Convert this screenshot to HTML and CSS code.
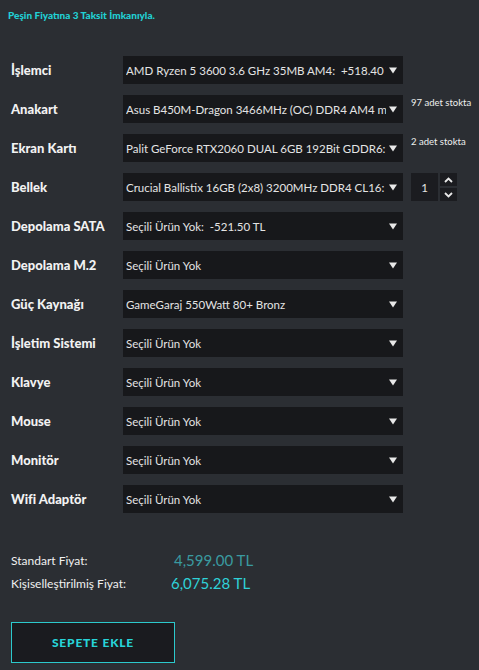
FILE: index.html
```html
<!DOCTYPE html>
<html lang="tr">
<head>
<meta charset="utf-8">
<link rel="stylesheet" href="styles.css">
</head>
<body>
<div class="page">
  <p class="promo">Peşin Fiyatına 3 Taksit İmkanıyla.</p>
  <div class="rows">
    <div class="row">
      <div class="label">İşlemci</div>
      <div class="select"><span class="val">AMD Ryzen 5 3600 3.6 GHz 35MB AM4:&nbsp; +518.40 TL</span><svg class="arrow" width="8" height="7" viewBox="0 0 8 7"><path d="M0 0.5 H8 L4 6.5 Z" fill="#e8e8e8"/></svg></div>
    </div>
    <div class="row">
      <div class="label">Anakart</div>
      <div class="select"><span class="val">Asus B450M-Dragon 3466MHz (OC) DDR4 AM4 mATX</span><svg class="arrow" width="8" height="7" viewBox="0 0 8 7"><path d="M0 0.5 H8 L4 6.5 Z" fill="#e8e8e8"/></svg></div>
      <div class="stock">97 adet stokta</div>
    </div>
    <div class="row">
      <div class="label">Ekran Kartı</div>
      <div class="select"><span class="val">Palit GeForce RTX2060 DUAL 6GB 192Bit GDDR6:&nbsp;</span><svg class="arrow" width="8" height="7" viewBox="0 0 8 7"><path d="M0 0.5 H8 L4 6.5 Z" fill="#e8e8e8"/></svg></div>
      <div class="stock">2 adet stokta</div>
    </div>
    <div class="row">
      <div class="label">Bellek</div>
      <div class="select"><span class="val">Crucial Ballistix 16GB (2x8) 3200MHz DDR4 CL16:&nbsp; ·</span><svg class="arrow" width="8" height="7" viewBox="0 0 8 7"><path d="M0 0.5 H8 L4 6.5 Z" fill="#e8e8e8"/></svg></div>
      <div class="qty">
        <div class="qty-box">1</div>
        <div class="spin">
          <div class="spin-btn"><svg width="9" height="6" viewBox="0 0 9 6"><path d="M1 5 L4.5 1.5 L8 5" fill="none" stroke="#e8e8e8" stroke-width="1.8"/></svg></div>
          <div class="spin-btn"><svg width="9" height="6" viewBox="0 0 9 6"><path d="M1 1 L4.5 4.5 L8 1" fill="none" stroke="#e8e8e8" stroke-width="1.8"/></svg></div>
        </div>
      </div>
    </div>
    <div class="row">
      <div class="label">Depolama SATA</div>
      <div class="select"><span class="val">Seçili Ürün Yok:&nbsp; -521.50 TL</span><svg class="arrow" width="8" height="7" viewBox="0 0 8 7"><path d="M0 0.5 H8 L4 6.5 Z" fill="#e8e8e8"/></svg></div>
    </div>
    <div class="row">
      <div class="label">Depolama M.2</div>
      <div class="select"><span class="val">Seçili Ürün Yok</span><svg class="arrow" width="8" height="7" viewBox="0 0 8 7"><path d="M0 0.5 H8 L4 6.5 Z" fill="#e8e8e8"/></svg></div>
    </div>
    <div class="row">
      <div class="label">Güç Kaynağı</div>
      <div class="select"><span class="val">GameGaraj 550Watt 80+ Bronz</span><svg class="arrow" width="8" height="7" viewBox="0 0 8 7"><path d="M0 0.5 H8 L4 6.5 Z" fill="#e8e8e8"/></svg></div>
    </div>
    <div class="row">
      <div class="label">İşletim Sistemi</div>
      <div class="select"><span class="val">Seçili Ürün Yok</span><svg class="arrow" width="8" height="7" viewBox="0 0 8 7"><path d="M0 0.5 H8 L4 6.5 Z" fill="#e8e8e8"/></svg></div>
    </div>
    <div class="row">
      <div class="label">Klavye</div>
      <div class="select"><span class="val">Seçili Ürün Yok</span><svg class="arrow" width="8" height="7" viewBox="0 0 8 7"><path d="M0 0.5 H8 L4 6.5 Z" fill="#e8e8e8"/></svg></div>
    </div>
    <div class="row">
      <div class="label">Mouse</div>
      <div class="select"><span class="val">Seçili Ürün Yok</span><svg class="arrow" width="8" height="7" viewBox="0 0 8 7"><path d="M0 0.5 H8 L4 6.5 Z" fill="#e8e8e8"/></svg></div>
    </div>
    <div class="row">
      <div class="label">Monitör</div>
      <div class="select"><span class="val">Seçili Ürün Yok</span><svg class="arrow" width="8" height="7" viewBox="0 0 8 7"><path d="M0 0.5 H8 L4 6.5 Z" fill="#e8e8e8"/></svg></div>
    </div>
    <div class="row">
      <div class="label">Wifi Adaptör</div>
      <div class="select"><span class="val">Seçili Ürün Yok</span><svg class="arrow" width="8" height="7" viewBox="0 0 8 7"><path d="M0 0.5 H8 L4 6.5 Z" fill="#e8e8e8"/></svg></div>
    </div>
  </div>
  <div class="prices">
    <div class="price-row">
      <span class="price-label">Standart Fiyat:</span>
      <span class="price std">4,599.00 TL</span>
    </div>
    <div class="price-row">
      <span class="price-label">Kişiselleştirilmiş Fiyat:</span>
      <span class="price custom">6,075.28 TL</span>
    </div>
  </div>
  <button class="cart">SEPETE EKLE</button>
</div>
</body>
</html>
```
FILE: styles.css
```css
html, body {
  margin: 0;
  padding: 0;
  background: #2b2e33;
}
body {
  font-family: Lato, "Noto Sans", sans-serif;
  color: #eeeeee;
  width: 479px;
  height: 670px;
  overflow: hidden;
}
.page {
  padding: 9px 0 0 0;
}
.promo {
  margin: 0 0 0 8px;
  font-size: 10px;
  font-weight: 900;
  color: #21d0d4;
  line-height: 12px;
}
.rows {
  margin-top: 35px;
  display: flex;
  flex-direction: column;
  gap: 11px;
}
.row {
  display: flex;
  align-items: center;
  height: 28px;
  padding-left: 11px;
}
.label {
  width: 112px;
  font-size: 13px;
  font-weight: 900;
  color: #f2f2f2;
}
.select {
  width: 280px;
  height: 28px;
  background: #17181b;
  display: flex;
  align-items: center;
  padding: 0 6px 0 3px;
  box-sizing: border-box;
}
.val {
  flex: 1;
  overflow: hidden;
  white-space: nowrap;
  font-size: 11.5px;
  color: #e4e4e4;
}
.arrow {
  margin-left: 3px;
  flex: none;
}
.stock {
  margin-left: 8px;
  font-size: 9.5px;
  color: #eeeeee;
  align-self: flex-start;
  margin-top: 2px;
}
.qty {
  margin-left: 8px;
  display: flex;
  gap: 2px;
}
.qty-box {
  width: 27px;
  height: 28px;
  background: #1b1c20;
  display: flex;
  align-items: center;
  justify-content: center;
  font-size: 11.5px;
  color: #e4e4e4;
}
.spin {
  display: flex;
  flex-direction: column;
  gap: 2px;
}
.spin-btn {
  width: 17px;
  height: 13px;
  background: #1b1c20;
  display: flex;
  align-items: center;
  justify-content: center;
}
.prices {
  margin-top: 38px;
  padding-left: 11px;
  display: flex;
  flex-direction: column;
  gap: 5px;
}
.price-row {
  display: flex;
  align-items: center;
  height: 18px;
}
.price-label {
  width: 160px;
  font-size: 12px;
  color: #f0f0f0;
}
.price {
  font-size: 15px;
}
.price.std {
  color: #3a9aa0;
  margin-left: 3px;
}
.price.custom {
  color: #2fd2d8;
}
.cart {
  margin: 30px 0 0 11px;
  width: 164px;
  height: 41px;
  background: #1a1b1f;
  border: 1.5px solid #2cc9cc;
  color: #27d3d8;
  font-family: Lato, "Noto Sans", sans-serif;
  font-weight: 900;
  font-size: 12px;
  letter-spacing: 0.8px;
  display: block;
  padding: 0;
}
```
